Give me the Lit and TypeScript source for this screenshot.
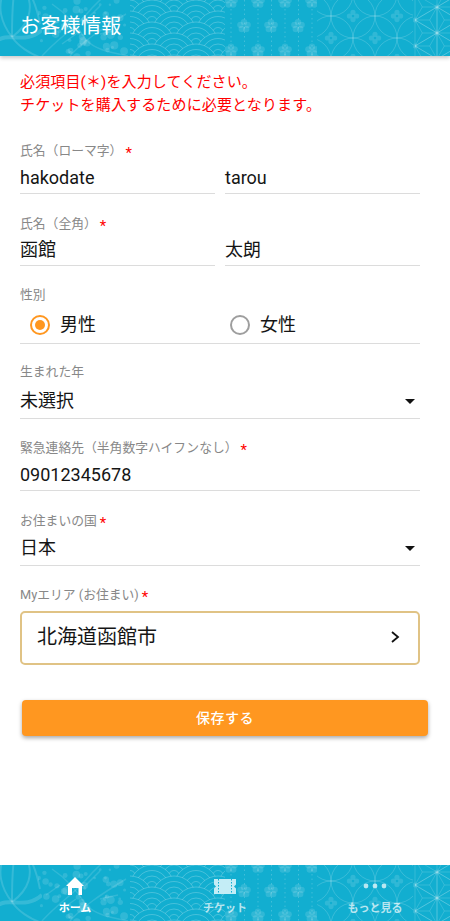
import { LitElement, html, css, svg } from "lit";
import { customElement } from "lit/decorators.js";

const BG = "#12aed0";
const LINE = "rgba(255,255,255,.17)";
const WAVE = "rgba(255,255,255,.22)";
const FILL = "rgba(255,255,255,.13)";

function hash(n: number) {
  const s = Math.sin(n * 127.1) * 43758.5453;
  return s - Math.floor(s);
}

function pattern(id: string, h: number) {
  const leaves = svg`
    <g fill="none" stroke="rgba(255,255,255,.15)" stroke-width="2">
      <path d="M3 -6 C-2 6 0 22 12 37" />
      <path d="M27 -6 C33 8 30 24 12 37" />
      <path d="M14 -6 C12 8 12 22 12 37" />
      <path d="M-4 42 C8 30 24 46 42 30" stroke-width="4" />
      <path d="M12 37 C18 46 30 54 42 58" />
      <path d="M30 -6 C36 4 38 14 40 24" />
    </g>`;
  const blossoms = [];
  for (let i = 0; i < 60; i++) {
    const x = 38 + hash(i + 1) * 92;
    const y = hash(i + 60) * (h + 10) - 5;
    const r = 1.2 + hash(i + 120) * 3;
    blossoms.push(svg`<circle cx=${x} cy=${y} r=${r} fill=${FILL} />`);
  }
  const branches = svg`
    <g fill="none" stroke=${FILL} stroke-width="1.5">
      <path d="M42 ${h} C60 ${h - 20} 74 30 92 8 L104 -4" />
      <path d="M70 ${h} C82 ${h - 14} 100 30 126 14" />
      <path d="M52 4 C64 12 76 24 86 40 C96 50 110 52 128 ${h}" />
      <path d="M60 20 L46 30 M84 22 L100 6 M100 34 L118 30 M76 34 L62 44" />
    </g>`;
  const waves = [];
  for (let row = -1; row < Math.ceil(h / 11) + 3; row++) {
    const y = row * 11;
    const off = row % 2 ? 22 : 0;
    for (let x = 108 + off; x < 252; x += 44) {
      waves.push(svg`
        <circle cx=${x} cy=${y} r="22" fill=${BG} stroke=${WAVE} />
        <circle cx=${x} cy=${y} r="16.5" fill="none" stroke=${WAVE} />
        <circle cx=${x} cy=${y} r="11" fill="none" stroke=${WAVE} />
        <circle cx=${x} cy=${y} r="5.5" fill="none" stroke=${WAVE} />`);
    }
  }
  const plums = [];
  for (let xi = 0; xi < 7; xi++) {
    const x = 231 + xi * 13.5;
    plums.push(svg`<line x1=${x} x2=${x} y1="0" y2=${h} stroke="rgba(255,255,255,.2)" stroke-dasharray="1.5 3" />`);
  }
  for (let row = -1; row < 4; row++) {
    const y = 26 + row * 24.5;
    const base = row % 2 === 0 ? 244 : 231;
    for (let x = base; x < 320; x += 27) {
      for (let a = 0; a < 5; a++) {
        const t = (a * 72 - 90) * Math.PI / 180;
        plums.push(svg`<circle cx=${x + Math.cos(t) * 3.8} cy=${y + Math.sin(t) * 3.8} r="3.2" fill=${FILL} />`);
      }
    }
  }
  const shippo = [];
  for (let j = -1; j < 5; j++) {
    for (let i = 0; i < 6; i++) {
      const cx = 309 + i * 44 + (j % 2 ? 22 : 0);
      const cy = 16 + j * 22;
      shippo.push(svg`<circle cx=${cx} cy=${cy} r="22" fill="none" stroke=${LINE} />`);
      for (let a = 0; a < 4; a++) {
        const t = a * Math.PI / 2;
        shippo.push(svg`<circle cx=${cx + Math.cos(t) * 3.6} cy=${cy + Math.sin(t) * 3.6} r="2.6" fill=${FILL} />`);
      }
    }
  }
  const asa = [];
  const dx = 22, dy = 26;
  for (let c = 0; c < 3; c++) {
    for (let r = -1; r < 4; r++) {
      const x = 415 + c * dx;
      const y = 20 + r * dy - (c % 2 ? 13 : 0);
      asa.push(svg`<circle cx=${x} cy=${y} r="2.5" fill=${FILL} />`);
      const tris = [
        [[x, y], [x, y + dy], [x + dx, y + 13]],
        [[x, y + dy], [x + dx, y + 13], [x + dx, y + 13 + dy]],
      ];
      for (const t of tris) {
        const mx = (t[0][0] + t[1][0] + t[2][0]) / 3;
        const my = (t[0][1] + t[1][1] + t[2][1]) / 3;
        asa.push(svg`<path d="M${t[0][0]} ${t[0][1]} L${t[1][0]} ${t[1][1]} L${t[2][0]} ${t[2][1]} Z M${t[0][0]} ${t[0][1]} L${mx} ${my} M${t[1][0]} ${t[1][1]} L${mx} ${my} M${t[2][0]} ${t[2][1]} L${mx} ${my}" fill="none" stroke=${LINE} stroke-width=".9" />`);
      }
    }
  }
  return html`<svg class="pat" width="450" height=${h} viewBox="0 0 450 ${h}" aria-hidden="true">
    <defs>
      <clipPath id="${id}w"><rect x="130" y="0" width="95" height=${h} /></clipPath>
      <clipPath id="${id}p"><rect x="225" y="0" width="92" height=${h} /></clipPath>
      <clipPath id="${id}s"><rect x="317" y="0" width="96" height=${h} /></clipPath>
      <clipPath id="${id}a"><rect x="413" y="0" width="37" height=${h} /></clipPath>
      <clipPath id="${id}f"><rect x="38" y="0" width="92" height=${h} /></clipPath>
      <clipPath id="${id}l"><rect x="0" y="0" width="42" height=${h} /></clipPath>
    </defs>
    <rect width="450" height=${h} fill=${BG} />
    <g clip-path="url(#${id}l)">${leaves}</g>
    <g clip-path="url(#${id}f)">${branches}${blossoms}</g>
    <g clip-path="url(#${id}w)">${waves}</g>
    <g clip-path="url(#${id}p)">${plums}</g>
    <g clip-path="url(#${id}s)">${shippo}</g>
    <g clip-path="url(#${id}a)">${asa}</g>
  </svg>`;
}

@customElement("app-root")
export class AppRoot extends LitElement {
  static styles = css`
    :host {
      display: flex;
      flex-direction: column;
      width: 450px;
      height: 921px;
      overflow: hidden;
      background: #fff;
      color: #151515;
      font-family: Roboto, "Noto Sans CJK JP", sans-serif;
    }
    .pat { position: absolute; left: 0; top: 0; display: block; }
    .header {
      position: relative;
      flex: none;
      height: 56px;
      box-shadow: 0 2px 4px rgba(0,0,0,.22);
      z-index: 2;
    }
    .title {
      position: relative;
      margin: 0;
      padding-left: 20px;
      font-size: 20px;
      letter-spacing: .3px;
      font-weight: 400;
      line-height: 52px;
      color: #fff;
    }
    main { flex: 1; padding: 15px 30px 0 20px; }
    .notice { color: #f00; font-size: 15px; letter-spacing: .15px; line-height: 23px; }
    .label { color: #888; font-size: 12.8px; line-height: 16px; height: 16px; white-space: nowrap; }
    .req { color: #f00; font-size: 15px; line-height: 0; margin-left: 3px; vertical-align: -3px; }
    .row { display: flex; gap: 10px; }
    .input {
      flex: 1;
      box-sizing: border-box;
      display: flex;
      align-items: center;
      justify-content: space-between;
      border-bottom: 1px solid #dcdcdc;
      font-size: 18px;
      line-height: 24px;
      padding-top: 4px;
    }
    .f1 { margin-top: 26px; } .f1 .input { height: 35px; }
    .f2 { margin-top: 22px; } .f2 .input { height: 34px; padding-top: 2px; }
    .f3 { margin-top: 21px; } .f3 .input { height: 41px; }
    .f4 { margin-top: 20px; } .f4 .input { height: 39px; }
    .f5 { margin-top: 21px; } .f5 .input { height: 35px; }
    .f6 { margin-top: 22px; } .f6 .input { height: 37px; padding-top: 2px; }
    .f7 { margin-top: 21px; }
    .caret {
      width: 0; height: 0; margin-right: 5px;
      border-left: 5px solid transparent;
      border-right: 5px solid transparent;
      border-top: 5px solid #111;
    }
    .radio { flex: 1; display: flex; align-items: center; gap: 10px; padding-left: 10px; }
    .circle {
      box-sizing: border-box; width: 20px; height: 20px; border-radius: 50%;
      border: 2px solid #9e9e9e; display: flex; align-items: center; justify-content: center;
    }
    .circle.on { border-color: #ff9720; }
    .circle.on::after { content: ""; width: 10px; height: 10px; border-radius: 50%; background: #ff9720; }
    .area {
      box-sizing: border-box;
      height: 54px;
      margin-top: 8px;
      display: flex;
      align-items: center;
      justify-content: space-between;
      padding: 0 18px 2px 15px;
      border: 2px solid #e0c385;
      border-radius: 5px;
      font-size: 20px;
      line-height: 26px;
    }
    .area svg { display: block; }
    .save {
      display: block;
      box-sizing: border-box;
      width: 406px;
      height: 36px;
      margin: 35px 0 0 2px;
      padding: 0 0 2px;
      border: 0;
      border-radius: 4px;
      background: #ff9720;
      color: #fff;
      font: 500 14px Roboto, "Noto Sans CJK JP", sans-serif;
      letter-spacing: .5px;
      box-shadow: 0 2px 4px rgba(0,0,0,.35);
    }
    .footer { position: relative; flex: none; height: 56px; display: flex; }
    .tab {
      position: relative;
      flex: 1;
      display: flex;
      flex-direction: column;
      align-items: center;
      color: rgba(255,255,255,.7);
      font-size: 11px;
      font-weight: 700;
      line-height: 14px;
    }
    .tab.active { color: #fff; }
    .ic { height: 24px; margin-top: 10px; margin-bottom: 3px; display: block; }
  `;

  field(cls: string, label: string, req: boolean, body: unknown) {
    return html`<div class=${cls}>
      <div class="label">${label}${req ? html`<span class="req">*</span>` : ""}</div>
      ${body}
    </div>`;
  }

  render() {
    return html`
      <header class="header">
        ${pattern("h", 56)}
        <h1 class="title">お客様情報</h1>
      </header>
      <main>
        <div class="notice">必須項目(＊)を入力してください。<br />チケットを購入するために必要となります。</div>
        ${this.field("f1", "氏名（ローマ字）", true, html`<div class="row"><div class="input">hakodate</div><div class="input">tarou</div></div>`)}
        ${this.field("f2", "氏名（全角）", true, html`<div class="row"><div class="input">函館</div><div class="input">太朗</div></div>`)}
        ${this.field("f3", "性別", false, html`<div class="row"><div class="input">
          <div class="radio"><span class="circle on"></span>男性</div>
          <div class="radio"><span class="circle"></span>女性</div>
        </div></div>`)}
        ${this.field("f4", "生まれた年", false, html`<div class="row"><div class="input">未選択<span class="caret"></span></div></div>`)}
        ${this.field("f5", "緊急連絡先（半角数字ハイフンなし）", true, html`<div class="row"><div class="input">09012345678</div></div>`)}
        ${this.field("f6", "お住まいの国", true, html`<div class="row"><div class="input">日本<span class="caret"></span></div></div>`)}
        ${this.field("f7", "Myエリア (お住まい)", true, html`<div class="area">北海道函館市
          <svg width="10" height="14" viewBox="0 0 10 14"><path d="M2 2 L8 7 L2 12" fill="none" stroke="#111" stroke-width="1.8" /></svg>
        </div>`)}
        <button class="save">保存する</button>
      </main>
      <footer class="footer">
        ${pattern("b", 56)}
        <div class="tab active">
          <svg class="ic" width="24" height="24" viewBox="0 0 24 24"><path fill-rule="evenodd" d="M12 2 L21 11 L19 11 V20 H5 V11 L3 11 Z M9 13 V20 H15.500 V13 Z" fill="#fff" /></svg>
          ホーム
        </div>
        <div class="tab">
          <svg class="ic" width="24" height="24" viewBox="0 0 24 24"><path d="M1 4 H23 V9.500 L21 11.500 L23 13.500 V19 H1 V13.500 L3 11.500 L1 9.500 Z" fill="#c4edf6" /><path d="M5.500 4 V19 M18.500 4 V19" stroke="#12aed0" stroke-dasharray="1.500 1.500" /></svg>
          チケット
        </div>
        <div class="tab">
          <svg class="ic" width="24" height="24" viewBox="0 0 24 24"><circle cx="3" cy="11" r="2.400" fill="#fff" fill-opacity=".7" /><circle cx="12" cy="11" r="2.400" fill="#fff" fill-opacity=".7" /><circle cx="21" cy="11" r="2.400" fill="#fff" fill-opacity=".7" /></svg>
          もっと見る
        </div>
      </footer>
    `;
  }
}
